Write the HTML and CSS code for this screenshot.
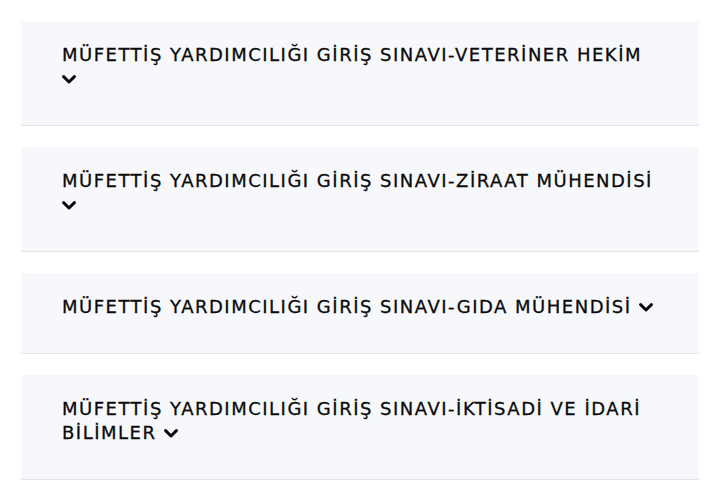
FILE: index.html
```html
<!DOCTYPE html>
<html lang="tr">
<head>
<meta charset="utf-8">
<title>Sınavlar</title>
<link rel="stylesheet" href="styles.css">
</head>
<body>
<div class="list">
  <div class="item">
    <h3 class="title">MÜFETTİŞ YARDIMCILIĞI GİRİŞ SINAVI-VETERİNER HEKİM <svg class="chev" viewBox="0 0 14 10" width="14" height="10"><polyline points="1.6,1.6 7,7 12.4,1.6"/></svg></h3>
  </div>
  <div class="item">
    <h3 class="title">MÜFETTİŞ YARDIMCILIĞI GİRİŞ SINAVI-ZİRAAT MÜHENDİSİ <svg class="chev" viewBox="0 0 14 10" width="14" height="10"><polyline points="1.6,1.6 7,7 12.4,1.6"/></svg></h3>
  </div>
  <div class="item">
    <h3 class="title">MÜFETTİŞ YARDIMCILIĞI GİRİŞ SINAVI-GIDA MÜHENDİSİ <svg class="chev" viewBox="0 0 14 10" width="14" height="10"><polyline points="1.6,1.6 7,7 12.4,1.6"/></svg></h3>
  </div>
  <div class="item">
    <h3 class="title">MÜFETTİŞ YARDIMCILIĞI GİRİŞ SINAVI-İKTİSADİ VE İDARİ BİLİMLER <svg class="chev" viewBox="0 0 14 10" width="14" height="10"><polyline points="1.6,1.6 7,7 12.4,1.6"/></svg></h3>
  </div>
</div>
</body>
</html>
```
FILE: styles.css
```css
html, body {
  margin: 0;
  padding: 0;
  background: #ffffff;
}
body {
  font-family: "DejaVu Sans", "Noto Sans", sans-serif;
  color: #0a0a0a;
}
.list {
  display: flex;
  flex-direction: column;
  gap: 21px;
  padding: 21px 6px 0 21px;
}
.item {
  background: #f7f8fb;
  border-bottom: 1px solid #e4e6e9;
  border-radius: 4px 4px 0 0;
  padding: 22px 41px 34px 41px;
}
.title {
  margin: 0;
  font-size: 18px;
  font-weight: normal;
  line-height: 24px;
  letter-spacing: 1.5px;
  -webkit-text-stroke: 0.3px #0a0a0a;
}
.chev {
  display: inline-block;
  vertical-align: baseline;
  fill: none;
  stroke: #0a0a0a;
  stroke-width: 3;
  stroke-linecap: round;
  stroke-linejoin: round;
}
```
